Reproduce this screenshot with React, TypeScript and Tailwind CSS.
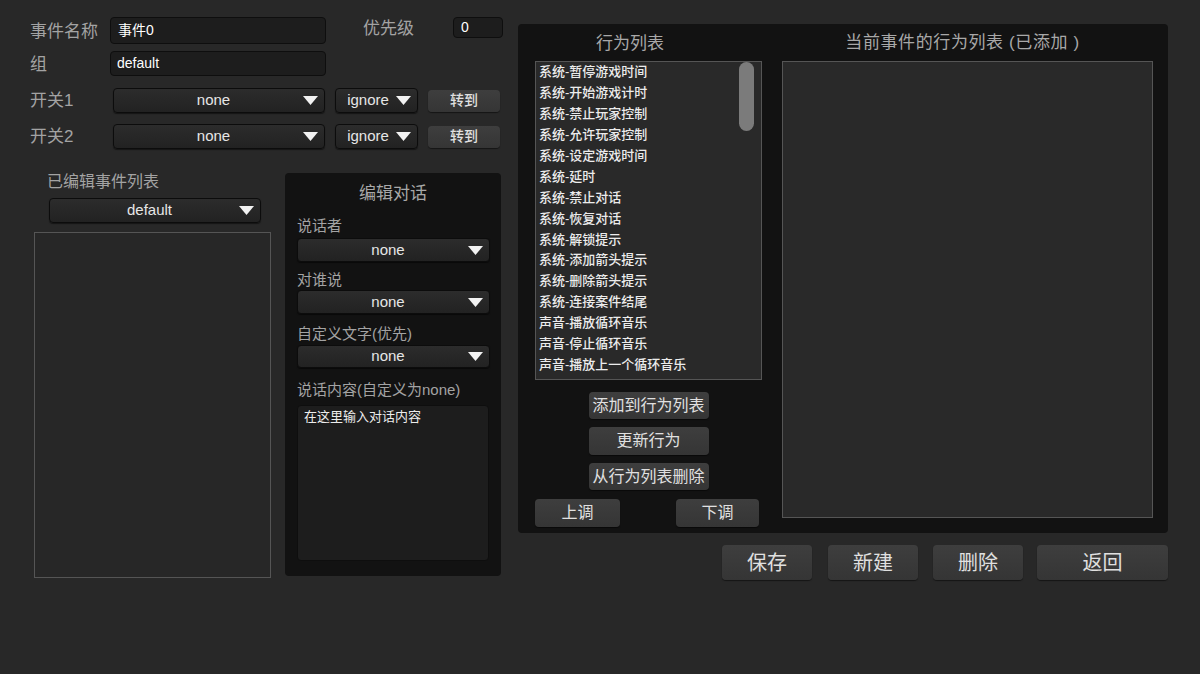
import React from "react";

const FONT = { fontFamily: '"Liberation Sans", "Noto Sans CJK SC", sans-serif' };

const actions = [
  "系统-暂停游戏时间",
  "系统-开始游戏计时",
  "系统-禁止玩家控制",
  "系统-允许玩家控制",
  "系统-设定游戏时间",
  "系统-延时",
  "系统-禁止对话",
  "系统-恢复对话",
  "系统-解锁提示",
  "系统-添加箭头提示",
  "系统-删除箭头提示",
  "系统-连接案件结尾",
  "声音-播放循环音乐",
  "声音-停止循环音乐",
  "声音-播放上一个循环音乐",
];

function Arrow() {
  return (
    <svg width="15" height="9" viewBox="0 0 15 9" className="shrink-0">
      <polygon points="0,0 15,0 7.5,9" fill="#f2f2f2" />
    </svg>
  );
}

function Dropdown({ value, className, pad = "pl-[10px]" }: { value: string; className: string; pad?: string }) {
  return (
    <div
      className={`relative flex shrink-0 items-center rounded-[4px] border border-[#0c0c0c] bg-gradient-to-b from-[#2c2c2c] to-[#222] shadow-[0_1px_1px_rgba(0,0,0,0.5)] ${className}`}
    >
      <span className={`flex-1 text-center text-[15px] text-[#e6e6e6] ${pad}`}>{value}</span>
      <span className="pr-[6px]">
        <Arrow />
      </span>
    </div>
  );
}

function Btn({ label, className }: { label: string; className: string }) {
  return (
    <div
      className={`flex shrink-0 items-center justify-center rounded-[4px] bg-gradient-to-b from-[#3e3e3e] to-[#353535] text-[#e0e0e0] shadow-[0_1px_1px_rgba(0,0,0,0.5)] ${className}`}
    >
      {label}
    </div>
  );
}

function Label({ text, className }: { text: string; className?: string }) {
  return <div className={`shrink-0 text-[17px] leading-[20px] text-[#a3a3a3] ${className ?? ""}`}>{text}</div>;
}

export default function App() {
  return (
    <div className="flex h-[674px] w-[1200px] overflow-hidden bg-[#282828]" style={FONT}>
      {/* left side */}
      <div className="flex w-[503px] shrink-0 flex-col pl-[30px] pt-[17px]">
        <div className="flex items-start">
          <Label text="事件名称" className="mt-[5px] w-[80px]" />
          <div className="flex h-[27px] w-[216px] shrink-0 items-center rounded-[4px] border border-[#0e0e0e] bg-[#1d1d1d] pl-[7px] text-[14px] text-white">
            事件0
          </div>
          <Label text="优先级" className="ml-[37px] mt-[2px] w-[90px]" />
          <div className="flex h-[21px] w-[50px] shrink-0 items-center rounded-[4px] border border-[#0e0e0e] bg-[#1d1d1d] pl-[7px] text-[14px] text-white">
            0
          </div>
        </div>

        <div className="mt-[7px] flex items-center">
          <Label text="组" className="mt-[2px] w-[80px]" />
          <div className="flex h-[25px] w-[216px] shrink-0 items-center rounded-[4px] border border-[#0e0e0e] bg-[#1d1d1d] pl-[6px] text-[14px] text-white">
            default
          </div>
        </div>

        {["开关1", "开关2"].map((s, i) => (
          <div key={s} className={`flex items-center ${i === 0 ? "mt-[12px]" : "mt-[11px]"}`}>
            <Label text={s} className="w-[83px]" />
            <Dropdown value="none" className="h-[25px] w-[212px]" />
            <Dropdown value="ignore" pad="pl-[4px]" className="ml-[10px] h-[25px] w-[83px]" />
            <Btn label="转到" className="ml-[10px] h-[22px] w-[72px] text-[14px] font-medium" />
          </div>
        ))}

        <div className="mt-[24px] flex">
          {/* edited list */}
          <div className="ml-[4px] flex w-[237px] shrink-0 flex-col">
            <div className="ml-[13px] mt-[-1px] text-[16px] leading-[20px] text-[#a3a3a3]">已编辑事件列表</div>
            <Dropdown value="default" className="ml-[15px] mt-[6px] h-[25px] w-[212px]" />
            <div className="mt-[9px] h-[346px] w-[237px] border border-[#555] bg-[#272727]" />
          </div>

          {/* dialog editor */}
          <div className="ml-[14px] flex h-[403px] w-[216px] shrink-0 flex-col rounded-[4px] bg-[#121212] px-[12px] pt-[11px]">
            <div className="text-center text-[17px] leading-[20px] text-[#a8a8a8]">编辑对话</div>
            <div className="mt-[13px] text-[15px] leading-[18px] text-[#a3a3a3]">说话者</div>
            <Dropdown value="none" className="mt-[3px] h-[24px] w-[193px]" />
            <div className="mt-[9px] text-[15px] leading-[18px] text-[#a3a3a3]">对谁说</div>
            <Dropdown value="none" className="mt-[1px] h-[24px] w-[193px]" />
            <div className="mt-[11px] text-[15px] leading-[18px] text-[#a3a3a3]">自定义文字(优先)</div>
            <Dropdown value="none" className="mt-[2px] h-[23px] w-[193px]" />
            <div className="mt-[13px] text-[15px] leading-[18px] text-[#a3a3a3]">说话内容(自定义为none)</div>
            <div className="mt-[6px] h-[156px] w-[192px] rounded-[4px] border border-[#0e0e0e] bg-[#1d1d1d] px-[6px] pt-[1px] text-[13px] text-[#ececec]">
              在这里输入对话内容
            </div>
          </div>
        </div>
      </div>

      {/* right side */}
      <div className="ml-[15px] flex flex-col pt-[24px]">
        <div className="flex h-[509px] w-[650px] rounded-[4px] bg-[#121212] pl-[17px] pr-[15px] pt-[10px]">
          <div className="flex w-[227px] shrink-0 flex-col items-center">
            <div className="self-start pl-[61px] text-[17px] leading-[20px] text-[#a8a8a8]">行为列表</div>
            <div className="relative mt-[7px] h-[319px] w-[227px] overflow-hidden border border-[#555] bg-[#292929] pl-[3px]">
              {actions.map((a) => (
                <div key={a} className="text-[13px] font-medium leading-[20.93px] text-[#ececec]">
                  {a}
                </div>
              ))}
              <div className="absolute right-[7px] top-0 h-[69px] w-[15px] rounded-full bg-[#7b7b7b]" />
            </div>
            <Btn label="添加到行为列表" className="mt-[12px] h-[27px] w-[120px] text-[16px]" />
            <Btn label="更新行为" className="mt-[8px] h-[28px] w-[120px] text-[16px]" />
            <Btn label="从行为列表删除" className="mt-[8px] h-[27px] w-[120px] text-[16px]" />
            <div className="mt-[9px] flex w-[227px] justify-between">
              <Btn label="上调" className="h-[28px] w-[85px] text-[16px]" />
              <Btn label="下调" className="mr-[3px] h-[28px] w-[83px] text-[16px]" />
            </div>
          </div>
          <div className="ml-[20px] flex w-[371px] shrink-0 flex-col items-center">
            <div className="mr-[10px] mt-[-1px] text-[17px] leading-[20px] tracking-[0.6px] text-[#a8a8a8]">
              当前事件的行为列表 (已添加 )
            </div>
            <div className="mt-[8px] h-[457px] w-[371px] border border-[#555] bg-[#292929]" />
          </div>
        </div>

        <div className="mt-[12px] flex">
          <Btn label="保存" className="ml-[204px] h-[35px] w-[90px] text-[20px]" />
          <Btn label="新建" className="ml-[16px] h-[35px] w-[90px] text-[20px]" />
          <Btn label="删除" className="ml-[15px] h-[35px] w-[90px] text-[20px]" />
          <Btn label="返回" className="ml-[14px] h-[35px] w-[131px] text-[20px]" />
        </div>
      </div>
    </div>
  );
}
